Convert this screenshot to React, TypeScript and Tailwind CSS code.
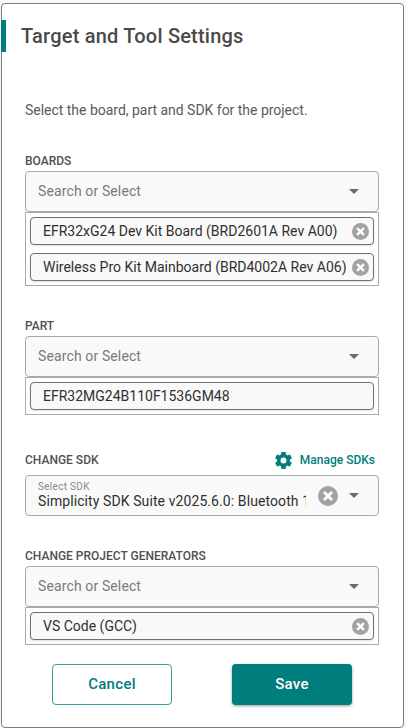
import React from "react";

function ClearIcon({ className }: { className: string }) {
  return (
    <svg viewBox="2 2 20 20" className={className} fill="#a3a3a3">
      <circle cx="12" cy="12" r="10" />
      <path d="M8 8l8 8M16 8l-8 8" stroke="#fff" strokeWidth="2.7" fill="none" />
    </svg>
  );
}

function Caret() {
  return (
    <svg viewBox="0 0 10 5" className="h-[5px] w-[10px] shrink-0" fill="#6b6b6b">
      <path d="M0 0h10L5 5z" />
    </svg>
  );
}

function Label({ children }: { children: React.ReactNode }) {
  return <div className="h-[15px] whitespace-nowrap text-[12px] leading-[15px] font-medium text-[#505050]">{children}</div>;
}

function SearchField() {
  return (
    <div className="flex h-[41px] items-center justify-between rounded-[4px] border border-[#a9a9a9] bg-[#f9f9f9] pr-[19px] pl-[12px]">
      <span className="text-[14px] tracking-[0.12px] text-[#7a7a7a]">Search or Select</span>
      <Caret />
    </div>
  );
}

function Chip({ text, clearable = true }: { text: string; clearable?: boolean }) {
  return (
    <div className="flex h-[28px] items-center justify-between rounded-[4px] border border-[#707070] bg-[#f9f9f9] pr-[4px] pl-[12px] shadow-[0_1px_2px_rgba(0,0,0,0.12)]">
      <span className="whitespace-nowrap text-[14px] text-[#303030]">{text}</span>
      {clearable && <ClearIcon className="h-[17px] w-[17px] shrink-0" />}
    </div>
  );
}

function ChipList({ children }: { children: React.ReactNode }) {
  return <div className="flex flex-col gap-[8px] border border-[#a9a9a9] bg-white p-[4px]">{children}</div>;
}

export default function App() {
  return (
    <div className="h-[728px] w-[406px] overflow-hidden bg-[#f8f8f8] pt-[3px] pl-[1px] font-[Roboto,sans-serif]">
      <main className="h-[725px] w-[403px] rounded-[4px] border border-[#7d7d7d] bg-white">
        <header className="-ml-px flex h-[48px] items-end">
          <div className="h-[32px] w-[5px] bg-[#007d7d]" />
          <h1 className="ml-[15px] h-[32px] whitespace-nowrap text-[20px] leading-[32px] font-medium tracking-[0.21px] text-[#4a4a4a]">Target and Tool Settings</h1>
        </header>

        <div className="ml-[23px] w-[354px]">
          <p className="mt-[48px] h-[20px] whitespace-nowrap text-[14px] leading-[20px] tracking-[-0.02px] text-[#5a5a5a]">Select the board, part and SDK for the project.</p>

          <section className="mt-[34px]">
            <Label>BOARDS</Label>
            <div className="mt-[2px]">
              <SearchField />
              <ChipList>
                <Chip text="EFR32xG24 Dev Kit Board (BRD2601A Rev A00)" />
                <Chip text="Wireless Pro Kit Mainboard (BRD4002A Rev A06)" />
              </ChipList>
            </div>
          </section>

          <section className="mt-[33px]">
            <Label>PART</Label>
            <div className="mt-[2px]">
              <SearchField />
              <ChipList>
                <Chip text="EFR32MG24B110F1536GM48" clearable={false} />
              </ChipList>
            </div>
          </section>

          <section className="mt-[35px]">
            <div className="flex h-[20px] items-center justify-between">
              <Label>CHANGE SDK</Label>
              <button className="flex items-center gap-[8px] pr-[4px] text-[12px] font-medium text-[#007d7d]">
                <svg viewBox="2 2 20 20" className="h-[17px] w-[17px]" fill="currentColor">
                  <path d="M19.43 12.98c.04-.32.07-.64.07-.98s-.03-.66-.07-.98l2.11-1.65c.19-.15.24-.42.12-.64l-2-3.46c-.12-.22-.39-.3-.61-.22l-2.49 1c-.52-.4-1.08-.73-1.69-.98l-.38-2.65A.49.49 0 0 0 14 2h-4c-.25 0-.46.18-.49.42l-.38 2.65c-.61.25-1.17.59-1.69.98l-2.49-1c-.23-.09-.49 0-.61.22l-2 3.46c-.13.22-.07.49.12.64l2.11 1.65c-.04.32-.07.65-.07.98s.03.66.07.98l-2.11 1.65c-.19.15-.24.42-.12.64l2 3.46c.12.22.39.3.61.22l2.49-1c.52.4 1.08.73 1.69.98l.38 2.65c.03.24.24.42.49.42h4c.25 0 .46-.18.49-.42l.38-2.65c.61-.25 1.17-.59 1.69-.98l2.49 1c.23.09.49 0 .61-.22l2-3.46c.12-.22.07-.49-.12-.64zM12 15.5a3.5 3.5 0 1 1 0-7 3.5 3.5 0 0 1 0 7z" />
                </svg>
                <span className="whitespace-nowrap">Manage SDKs</span>
              </button>
            </div>
            <div className="mt-[5px] flex h-[41px] items-center rounded-[4px] border border-[#a9a9a9] bg-[#f9f9f9] pr-[19px] pl-[12px]">
              <div className="w-[268px] overflow-hidden pb-[2px]">
                <div className="text-[10px] leading-[12px] tracking-[0.3px] text-[#8a8a8a]">Select SDK</div>
                <div className="whitespace-nowrap text-[14px] leading-[16px] tracking-[0.09px] text-[#303030]">Simplicity SDK Suite v2025.6.0: Bluetooth 1</div>
              </div>
              <ClearIcon className="ml-[12px] h-[20px] w-[20px] shrink-0" />
              <div className="ml-auto"><Caret /></div>
            </div>
          </section>

          <section className="mt-[33px]">
            <Label>CHANGE PROJECT GENERATORS</Label>
            <div className="mt-[2px]">
              <SearchField />
              <ChipList>
                <Chip text="VS Code (GCC)" />
              </ChipList>
            </div>
          </section>
        </div>

        <footer className="mt-[19px] ml-[50px] flex gap-[60px] text-[15px] font-medium">
          <button className="h-[41px] w-[120px] rounded-[4px] border border-[#3a9c9c] bg-white tracking-[0.3px] text-[#007d7d]">Cancel</button>
          <button className="h-[41px] w-[120px] rounded-[4px] bg-[#007d7d] tracking-[0.3px] text-white shadow-[0_1px_3px_rgba(0,0,0,0.4)]">Save</button>
        </footer>
      </main>
    </div>
  );
}
